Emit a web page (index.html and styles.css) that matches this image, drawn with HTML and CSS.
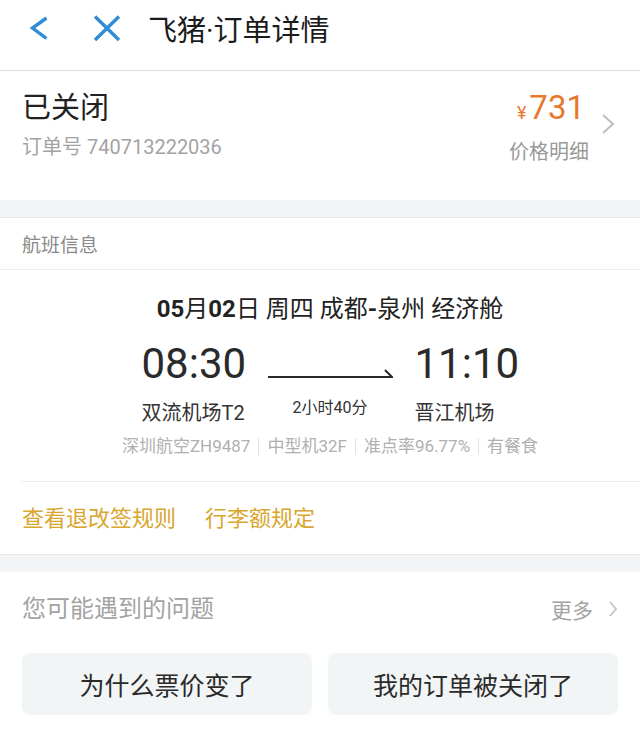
FILE: index.html
```html
<!DOCTYPE html>
<html lang="zh-CN">
<head>
    <meta charset="UTF-8">
    <title>飞猪·订单详情</title>
    <link rel="stylesheet" href="styles.css">
</head>
<body>
<div class="header">
    <svg class="back" width="20" height="26" viewBox="0 0 20 26">
        <path d="M17.5 3 L3.5 13 L17.5 23.5" fill="none" stroke="#2f8bd6" stroke-width="3.4"/>
    </svg>
    <svg class="close" width="30" height="28" viewBox="0 0 30 28">
        <path d="M3 2.5 L27 26 M27 2.5 L3 26" fill="none" stroke="#2f8bd6" stroke-width="3.4"/>
    </svg>
    <div class="title">飞猪·订单详情</div>
</div>

<div class="order">
    <div class="order-main">
        <div class="status">已关闭</div>
        <div class="order-no">订单号 740713222036</div>
    </div>
    <div class="price-box">
        <div class="price"><span class="yen">¥</span>731</div>
        <div class="price-label">价格明细</div>
    </div>
    <svg class="arrow" width="14" height="22" viewBox="0 0 14 22">
        <path d="M2 2 L12 11 L2 20" fill="none" stroke="#bdbdbd" stroke-width="2"/>
    </svg>
</div>

<div class="band"></div>

<div class="card">
    <div class="card-head">航班信息</div>
    <div class="flight">
        <div class="route"><b>05</b>月<b>02</b>日 周四 成都<b>-</b>泉州 经济舱</div>
        <div class="times">
            <div class="time">08:30</div>
            <svg class="line" width="125" height="48" viewBox="0 0 125 48">
                <path d="M0 37 H124 L117 30" fill="none" stroke="#2a2a2a" stroke-width="2"/>
            </svg>
            <div class="time">11:10</div>
            <div class="airport">双流机场T2</div>
            <div class="duration">2小时40分</div>
            <div class="airport">晋江机场</div>
        </div>
        <div class="info">
            <span>深圳航空ZH9487</span><i class="sep"></i>
            <span>中型机32F</span><i class="sep"></i>
            <span>准点率96.77%</span><i class="sep"></i>
            <span>有餐食</span>
        </div>
    </div>
    <div class="links">
        <span>查看退改签规则</span>
        <span>行李额规定</span>
    </div>
</div>

<div class="band band-top"></div>

<div class="faq">
    <div class="faq-head">
        <div class="faq-title">您可能遇到的问题</div>
        <div class="more">
            更多
            <svg width="10" height="18" viewBox="0 0 10 18">
                <path d="M2 2 L8 9 L2 16" fill="none" stroke="#c4c4c4" stroke-width="1.8"/>
            </svg>
        </div>
    </div>
    <div class="faq-list">
        <div class="faq-item">为什么票价变了</div>
        <div class="faq-item">我的订单被关闭了</div>
    </div>
</div>
</body>
</html>
```

FILE: styles.css
```css
* {
    margin: 0;
    padding: 0;
    box-sizing: border-box;
}

body {
    width: 640px;
    background: #fff;
    font-family: Roboto, "Noto Sans CJK SC", sans-serif;
    color: #333;
}

.header {
    height: 71px;
    padding-bottom: 15px;
    display: flex;
    align-items: center;
    background: #fff;
    border-bottom: 1px solid #dcdcdc;
}
.header .back {
    margin-left: 29px;
}
.header .close {
    margin-left: 43px;
}
.header .title {
    margin-left: 26px;
    font-size: 29px;
    color: #1b1b1b;
}

.order {
    height: 129px;
    display: flex;
    align-items: flex-start;
    padding: 19px 25px 0 22px;
    background: #fff;
}
.order-main {
    flex: 1;
}
.status {
    font-size: 29px;
    line-height: 36px;
    color: #222;
}
.order-no {
    margin-top: 8px;
    font-size: 20px;
    line-height: 26px;
    color: #a3a3a3;
}
.price-box {
    text-align: right;
}
.price {
    padding-right: 4px;
    font-size: 33px;
    line-height: 36px;
    color: #e8782f;
}
.price .yen {
    margin-right: 3px;
    font-size: 18px;
}
.price-label {
    margin-top: 8px;
    font-size: 20px;
    line-height: 26px;
    color: #999;
}
.order .arrow {
    margin: 23px 0 0 12px;
}

.band {
    height: 18px;
    background: #f2f4f5;
    border-bottom: 1px solid #e6e8e9;
}
.band-top {
    border-bottom: none;
    border-top: 1px solid #e4e6e7;
}

.card {
    background: #fff;
}
.card-head {
    height: 52px;
    display: flex;
    align-items: center;
    padding-left: 22px;
    font-size: 19px;
    color: #8a8a8a;
    border-bottom: 1px solid #ececec;
}

.flight {
    padding: 23px 0 24px 20px;
    text-align: center;
}
.route {
    font-size: 24px;
    line-height: 32px;
    font-weight: 400;
    color: #222;
}
.route b {
    font-weight: 700;
}
.times {
    display: grid;
    grid-template-columns: 104px 125px 104px;
    column-gap: 22px;
    justify-content: center;
    margin-top: 15px;
    text-align: left;
    white-space: nowrap;
}
.time {
    font-size: 42px;
    line-height: 48px;
    color: #2a2a2a;
}
.line {
    display: block;
}
.airport {
    margin-top: 12px;
    font-size: 20px;
    line-height: 26px;
    color: #333;
}
.duration {
    margin-top: 10px;
    font-size: 16px;
    line-height: 20px;
    text-align: center;
    color: #333;
}
.info {
    display: flex;
    justify-content: center;
    align-items: center;
    margin-top: 9px;
    font-size: 17px;
    line-height: 22px;
    color: #b0b0b0;
}
.info .sep {
    width: 1px;
    height: 17px;
    margin: 0 8px;
    background: #e2e2e2;
}

.links {
    height: 73px;
    display: flex;
    align-items: center;
    gap: 29px;
    margin-left: 22px;
    padding-bottom: 4px;
    border-top: 1px solid #ececec;
    font-size: 22px;
    color: #d9a62e;
}

.faq {
    height: 157px;
    padding: 21px 22px 0;
    background: #fff;
}
.faq-head {
    display: flex;
    align-items: center;
    justify-content: space-between;
}
.faq-title {
    font-size: 24px;
    line-height: 32px;
    color: #a3a3a3;
}
.more {
    display: flex;
    align-items: center;
    gap: 15px;
    font-size: 21px;
    color: #a3a3a3;
}
.faq-list {
    display: grid;
    grid-template-columns: 1fr 1fr;
    gap: 16px;
    margin-top: 28px;
}
.faq-item {
    height: 62px;
    display: flex;
    align-items: center;
    justify-content: center;
    border-radius: 8px;
    background: #f2f5f6;
    font-size: 25px;
    color: #2a2a2a;
}
```
